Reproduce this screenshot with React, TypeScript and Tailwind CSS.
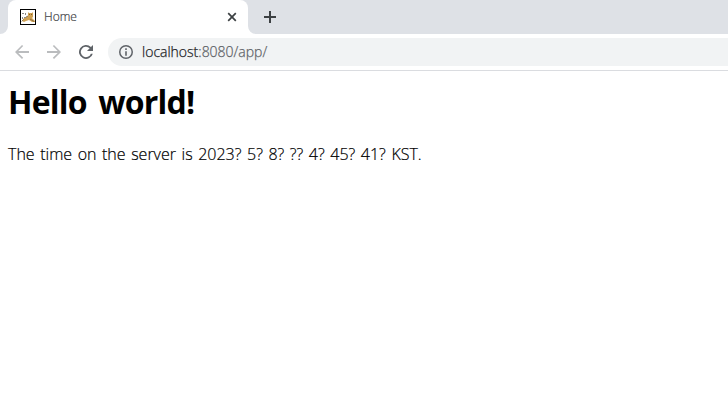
import React from "react";

function TabFoot({ flip = false }: { flip?: boolean }) {
  return (
    <svg className={`h-2 w-2 self-end ${flip ? "-scale-x-100" : ""}`} viewBox="0 0 8 8" fill="#fff">
      <path d="M8 0v8H0a8 8 0 0 0 8-8z" />
    </svg>
  );
}

function TomcatIcon() {
  return (
    <svg className="h-4 w-4 shrink-0" viewBox="0 0 16 16">
      <rect width="16" height="16" fill="#000" />
      <rect x="1" y="1" width="14" height="14" fill="#fff" />
      <path d="M2 12l2-3 4-2V3l1 1h3l1-1v5l-1 1 3 3v1h-3l-3-2-3 1-2 1z" fill="#d0a255" />
      <path d="M1.5 12.5l2-2M6 8l2-1M10 10l4 2.500" stroke="#69583c" strokeWidth=".7" />
      <path d="M2 4h2v1H2zM5 4h1v2H5zM4 8h2v1H4zM2 8h1v2H2z" fill="#8a8a8a" />
      <path d="M9 5h1v1H9zM11 5h1v1h-1z" fill="#805d23" />
    </svg>
  );
}

function TabStrip() {
  return (
    <div className="flex h-[34px] bg-[#dee1e6]">
      <TabFoot />
      <div className="flex w-60 items-center rounded-t-lg bg-white pl-3 pr-[11px]">
        <TomcatIcon />
        <span className="ml-2 flex-1 text-[12px] leading-4 text-[#3c4043] [-webkit-text-stroke:0.2px]">Home</span>
        <svg className="h-[10px] w-[10px]" viewBox="0 0 10 10" stroke="#3c4043" strokeWidth="1.7">
          <path d="M1.2 1.2l7.6 7.6M8.8 1.2L1.2 8.8" />
        </svg>
      </div>
      <TabFoot flip />
      <svg className="ml-2 mt-[11px] h-3 w-3" viewBox="0 0 12 12" fill="#3c4043">
        <path d="M5 0h2v5h5v2H7v5H5V7H0V5h5z" />
      </svg>
    </div>
  );
}

function Toolbar() {
  return (
    <div className="flex h-[37px] items-center border-b border-[#dadce0] bg-white pl-[14px]">
      <svg className="h-4 w-4" viewBox="0 0 16 16" fill="#babcbe">
        <path d="M15 7H4.3l4.9-4.9L8 1 1 8l7 7 1.2-1.2L4.3 9H15z" />
      </svg>
      <svg className="ml-4 h-4 w-4" viewBox="0 0 16 16" fill="#babcbe">
        <path d="M1 7h10.7L6.8 2.1 8 1l7 7-7 7-1.2-1.2L11.7 9H1z" />
      </svg>
      <svg className="ml-4 h-4 w-4" viewBox="0 0 16 16" fill="#5f6368">
        <path d="M12.95 3.05A7 7 0 1 0 14.77 9.8h-1.9A5.2 5.2 0 1 1 11.65 4.3L9 7h6V1z" />
      </svg>
      <div className="ml-[14px] flex h-7 flex-1 items-center rounded-l-full bg-[#f1f3f4] pl-[11px]">
        <svg className="h-[14px] w-[14px]" viewBox="0 0 14 14" fill="#5f6368">
          <circle cx="7" cy="7" r="6.25" fill="none" stroke="#5f6368" strokeWidth="1.5" />
          <path d="M6.2 3.3h1.6v1.6H6.2zM6.2 6.2h1.6v4.5H6.2z" />
        </svg>
        <span className="ml-[9px] text-[14px] leading-5 text-[#202124] [-webkit-text-stroke:0.25px]">
          localhost<span className="text-[#5f6368]">:8080/app/</span>
        </span>
      </div>
    </div>
  );
}

export default function App() {
  return (
    <div className="h-[418px] w-[728px] overflow-hidden bg-white font-['Open_Sans','Noto_Sans',sans-serif] font-light">
      <TabStrip />
      <Toolbar />
      <main className="px-2 text-black">
        <h1 className="pt-[9px] text-[32px] font-bold leading-[43px] tracking-[-0.8px] [word-spacing:4px]">Hello world!</h1>
        <p className="mt-5 whitespace-nowrap text-[16px] leading-[22px] [word-spacing:1.4px] [-webkit-text-stroke:0.2px]">
          The time on the server is 2023? 5? 8? ?? 4? 45? 41? KST.
        </p>
      </main>
    </div>
  );
}
